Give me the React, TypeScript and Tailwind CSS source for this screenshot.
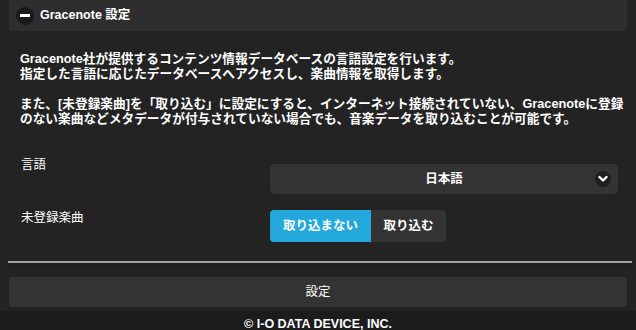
import React from "react";

const FONT = { fontFamily: '"Liberation Sans", "Noto Sans CJK JP", sans-serif' };

export default function App() {
  return (
    <div
      className="w-[636px] h-[330px] overflow-hidden bg-[#232323] text-white"
      style={FONT}
    >
      {/* Header */}
      <div className="mx-[9px] h-[31px] bg-[#2e2e2e] rounded-b-[4px] flex items-center pl-[7px] gap-[6px]">
        <div className="w-[18px] h-[18px] rounded-full bg-[#1a1a1a] flex items-center justify-center">
          <div className="w-[10px] h-[3px] bg-white" />
        </div>
        <span className="text-[12.5px] font-bold leading-[15px]">Gracenote 設定</span>
      </div>

      {/* Description */}
      <div className="pl-[20px] pt-[21px] text-[12.7px] font-bold leading-[15px] whitespace-nowrap">
        <div>Gracenote社が提供するコンテンツ情報データベースの言語設定を行います。</div>
        <div>指定した言語に応じたデータベースへアクセスし、楽曲情報を取得します。</div>
        <div className="h-[15px]" />
        <div>また、[未登録楽曲]を「取り込む」に設定にすると、インターネット接続されていない、Gracenoteに登録</div>
        <div>のない楽曲などメタデータが付与されていない場合でも、音楽データを取り込むことが可能です。</div>
      </div>

      {/* Rows */}
      <div className="pl-[21px] pt-[31px] flex flex-col text-[12.5px] leading-[15px]">
        <div className="flex items-start">
          <div className="w-[249px]">言語</div>
          <div className="mt-[6px] w-[348px] h-[30px] bg-[#333333] rounded-[4px] relative flex items-center justify-center">
            <span className="font-bold">日本語</span>
            <div className="absolute right-[7px] top-[7px] w-[16px] h-[16px] rounded-full bg-[#1e1e1e] flex items-center justify-center">
              <svg width="10" height="8" viewBox="0 0 10 8">
                <path d="M1.5 2 L5 5.5 L8.5 2" fill="none" stroke="white" strokeWidth="2.4" strokeLinecap="round" strokeLinejoin="round" />
              </svg>
            </div>
          </div>
        </div>
        <div className="flex items-start mt-[16px]">
          <div className="w-[249px] pt-[1px]">未登録楽曲</div>
          <div className="flex">
            <div className="w-[101px] h-[32px] bg-[#23a8dc] rounded-l-[4px] flex items-center justify-center font-bold">
              取り込まない
            </div>
            <div className="w-[75px] h-[32px] bg-[#333333] rounded-r-[4px] flex items-center justify-center font-bold">
              取り込む
            </div>
          </div>
        </div>
      </div>

      {/* Separator */}
      <div className="mt-[19px] ml-[8px] mr-[4px] h-[2px] bg-[#a3a3a3]" />
      <div className="ml-[8px] mr-[4px] h-[4px] bg-[#1f1f1f]" />

      {/* Submit */}
      <div className="mt-[10px] mx-[9px] h-[30px] bg-[#333333] rounded-[4px] flex items-center justify-center text-[12.5px]">
        設定
      </div>

      {/* Footer */}
      <div className="mt-[4px] bg-[#1c1c1c] h-[40px] pt-[6px] text-center text-[12.5px] font-bold leading-[15px]">
        © I-O DATA DEVICE, INC.
      </div>
    </div>
  );
}
